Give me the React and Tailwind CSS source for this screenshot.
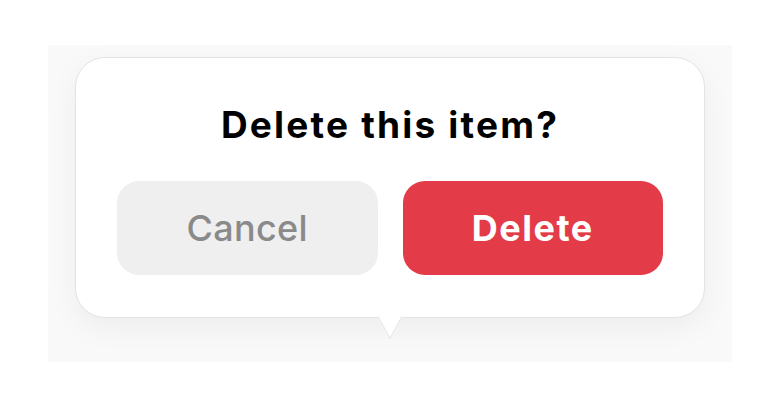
import React from "react";

export default function App() {
  return (
    <div className="w-[780px] h-[410px] bg-white flex justify-center pt-[45px] font-['Inter','Liberation_Sans',sans-serif]">
      <div className="w-[684px] h-[317px] bg-[#f9f9f9] flex justify-center pt-[12px]">
        <div className="relative w-[630px] h-[261px] bg-white border border-[#e3e3e3] rounded-[30px] shadow-[0_10px_30px_rgba(0,0,0,0.05)] flex flex-col items-center px-[41px]">
          <h1 className="mt-[45px] text-[37px] leading-[44px] font-bold text-black tracking-[2.2px]">
            Delete this item?
          </h1>
          <div className="mt-[34px] w-full flex gap-[25px]">
            <button className="flex-1 h-[94px] rounded-[22px] bg-[#efefef] text-[#8a8a8a] text-[36px] font-medium tracking-[0.3px]">
              Cancel
            </button>
            <button className="flex-1 h-[94px] rounded-[22px] bg-[#e43b48] text-white text-[36px] font-bold tracking-[1.5px]">
              Delete
            </button>
          </div>
          <svg
            className="absolute left-1/2 -translate-x-1/2 top-full -mt-[1px]"
            width="26"
            height="24"
            viewBox="0 0 26 24"
          >
            <path d="M0 0 L13 23 L26 0 Z" fill="#ffffff" />
            <path d="M1 0 L13 22.5 L25 0" fill="none" stroke="#e3e3e3" strokeWidth="1" />
          </svg>
        </div>
      </div>
    </div>
  );
}
